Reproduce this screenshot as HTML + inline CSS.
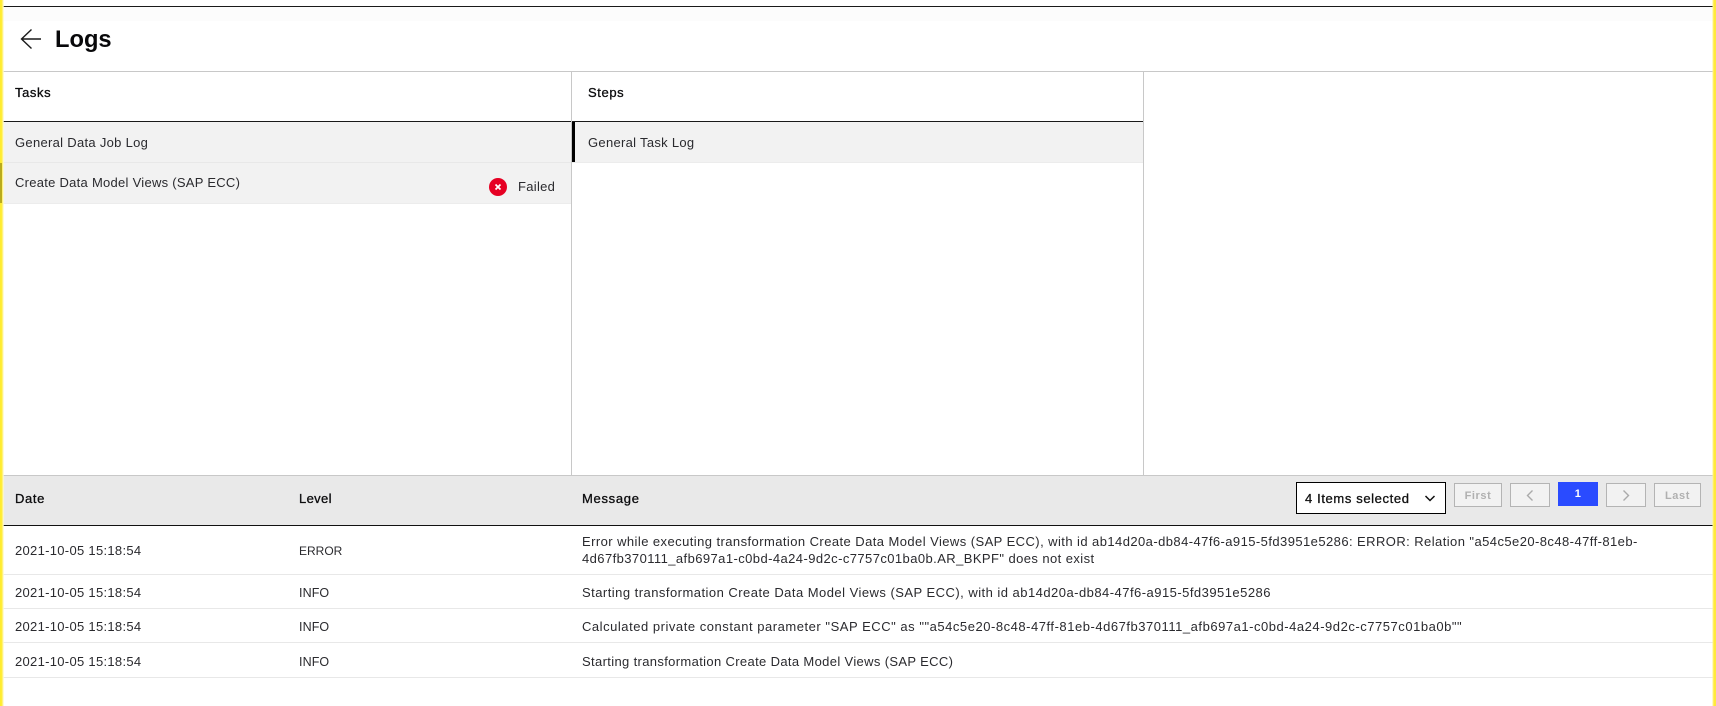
<!DOCTYPE html>
<html lang="en"><head><meta charset="utf-8"><title>Logs</title>
<style>
html,body{margin:0;padding:0;background:#fff}
body{position:relative;width:1716px;height:706px;overflow:hidden;font-family:"Liberation Sans",sans-serif;font-size:13px;color:#2a2a2e;letter-spacing:.3px}
.a{position:absolute}
.t{position:absolute;line-height:18px;height:18px;white-space:nowrap}
.h{color:#0c0c0e;-webkit-text-stroke:.3px #0c0c0e}
.btn{position:absolute;box-sizing:border-box;top:483px;height:24px;border:1px solid #b4b4b4;background:#f2f2f2;color:#b0b0b0;font-size:11px;font-weight:bold;text-align:center;line-height:24px;letter-spacing:.6px}
</style></head>
<body>
<div class="a" style="left:0;top:6px;width:1716px;height:1px;background:#1a1a1a"></div>
<div class="a" style="left:0;top:7px;width:1716px;height:14px;background:#fcfcfc"></div>

<svg class="a" style="left:20px;top:28px" width="24" height="24" viewBox="0 0 24 24" fill="none" stroke="#1a1a1a" stroke-width="1.4"><path d="M21 11H1.500M11.500 1.500L1.500 11L11.500 20.500"/></svg>
<div class="a" style="left:55px;top:24px;line-height:32px;font-size:23.7px;font-weight:bold;color:#08080a;letter-spacing:0">Logs</div>

<div class="a" style="left:0;top:71px;width:1716px;height:1px;background:#c8c8c8"></div>
<div class="a" style="left:571px;top:72px;width:1px;height:403px;background:#c8c8c8"></div>
<div class="a" style="left:1143px;top:72px;width:1px;height:403px;background:#c8c8c8"></div>

<div class="t h" style="left:15px;top:84px;letter-spacing:.6px">Tasks</div>
<div class="t h" style="left:588px;top:84px;letter-spacing:.6px">Steps</div>
<div class="a" style="left:0;top:121px;width:571px;height:1px;background:#1a1a1a"></div>
<div class="a" style="left:572px;top:121px;width:571px;height:1px;background:#1a1a1a"></div>

<div class="a" style="left:0;top:122px;width:571px;height:40px;background:#f2f2f2;border-bottom:1px solid #e8e8e8"></div>
<div class="a" style="left:0;top:163px;width:571px;height:40px;background:#f2f2f2;border-bottom:1px solid #ececec"></div>
<div class="a" style="left:572px;top:122px;width:571px;height:40px;background:#f2f2f2;border-bottom:1px solid #ececec"></div>
<div class="a" style="left:572px;top:122px;width:3px;height:40px;background:#000"></div>

<div class="t" style="left:15px;top:134px">General Data Job Log</div>
<div class="t" style="left:15px;top:174px;letter-spacing:.27px">Create Data Model Views (SAP ECC)</div>
<div class="t" style="left:588px;top:134px">General Task Log</div>

<svg class="a" style="left:489px;top:178px" width="18" height="18" viewBox="0 0 18 18"><circle cx="9" cy="9" r="9" fill="#e60023"/><path d="M6.500 6.500L11.500 11.500M11.500 6.500L6.500 11.500" stroke="#fff" stroke-width="1.700"/></svg>
<div class="t" style="left:518px;top:178px">Failed</div>

<div class="a" style="left:0;top:475px;width:1716px;height:50px;background:#e9e9e9;border-top:1px solid #c8c8c8;box-sizing:border-box"></div>
<div class="a" style="left:0;top:525px;width:1716px;height:1px;background:#111"></div>
<div class="t h" style="left:15px;top:490px;letter-spacing:.65px">Date</div>
<div class="t h" style="left:299px;top:490px;letter-spacing:.35px">Level</div>
<div class="t h" style="left:582px;top:490px;letter-spacing:.7px">Message</div>

<div class="a" style="left:1296px;top:482px;width:150px;height:32px;box-sizing:border-box;border:1px solid #000;background:#fff"></div>
<div class="t" style="left:1305px;top:490px;color:#111;-webkit-text-stroke:.3px #111;letter-spacing:.62px">4 Items selected</div>
<svg class="a" style="left:1423px;top:494px" width="14" height="10" viewBox="0 0 14 10" fill="none" stroke="#111" stroke-width="1.500"><path d="M2.500 2L7 6.500L11.500 2"/></svg>

<div class="btn" style="left:1454px;width:48px">First</div>
<div class="btn" style="left:1510px;width:40px"></div>
<svg class="a" style="left:1524px;top:489px" width="12" height="13" viewBox="0 0 12 13" fill="none" stroke="#aaa" stroke-width="1.400"><path d="M8.500 1.500L3.500 6.500L8.500 11.500"/></svg>
<div class="a" style="left:1558px;top:482px;width:40px;height:24px;background:#2a4bff;color:#fff;font-size:11px;font-weight:bold;text-align:center;line-height:25px">1</div>
<div class="btn" style="left:1606px;width:40px"></div>
<svg class="a" style="left:1620px;top:489px" width="12" height="13" viewBox="0 0 12 13" fill="none" stroke="#aaa" stroke-width="1.400"><path d="M3.500 1.500L8.500 6.500L3.500 11.500"/></svg>
<div class="btn" style="left:1654px;width:47px">Last</div>

<div class="a" style="left:0;top:574px;width:1716px;height:1px;background:#e8e8e8"></div>
<div class="a" style="left:0;top:608px;width:1716px;height:1px;background:#e8e8e8"></div>
<div class="a" style="left:0;top:642px;width:1716px;height:1px;background:#e8e8e8"></div>
<div class="a" style="left:0;top:677px;width:1716px;height:1px;background:#e8e8e8"></div>

<div class="t" style="left:15px;top:542px">2021-10-05 15:18:54</div>
<div class="t" style="left:299px;top:542px;font-size:12px;letter-spacing:0">ERROR</div>
<div class="t" style="left:582px;top:533px;letter-spacing:.43px">Error while executing transformation Create Data Model Views (SAP ECC), with id ab14d20a-db84-47f6-a915-5fd3951e5286: ERROR: Relation "a54c5e20-8c48-47ff-81eb-</div>
<div class="t" style="left:582px;top:550px;letter-spacing:.42px">4d67fb370111_afb697a1-c0bd-4a24-9d2c-c7757c01ba0b.AR_BKPF" does not exist</div>

<div class="t" style="left:15px;top:584px">2021-10-05 15:18:54</div>
<div class="t" style="left:299px;top:584px;font-size:12.5px;letter-spacing:.1px">INFO</div>
<div class="t" style="left:582px;top:584px;letter-spacing:.47px">Starting transformation Create Data Model Views (SAP ECC), with id ab14d20a-db84-47f6-a915-5fd3951e5286</div>

<div class="t" style="left:15px;top:618px">2021-10-05 15:18:54</div>
<div class="t" style="left:299px;top:618px;font-size:12.5px;letter-spacing:.1px">INFO</div>
<div class="t" style="left:582px;top:618px;letter-spacing:.53px">Calculated private constant parameter "SAP ECC" as ""a54c5e20-8c48-47ff-81eb-4d67fb370111_afb697a1-c0bd-4a24-9d2c-c7757c01ba0b""</div>

<div class="t" style="left:15px;top:653px">2021-10-05 15:18:54</div>
<div class="t" style="left:299px;top:653px;font-size:12.5px;letter-spacing:.1px">INFO</div>
<div class="t" style="left:582px;top:653px;letter-spacing:.35px">Starting transformation Create Data Model Views (SAP ECC)</div>

<div class="a" style="left:0;top:0;width:4px;height:706px;background:linear-gradient(90deg,#ffec2e 0,#ffec2e 1.500px,#fff27a 2.500px,#fffbd0 3.500px,rgba(255,255,255,0) 4px)"></div>
<div class="a" style="left:0;top:163px;width:2px;height:40px;background:#b9ab1c"></div>
<div class="a" style="left:1712px;top:0;width:4px;height:706px;background:linear-gradient(90deg,rgba(255,255,255,0) 0,#fff58a 1px,#ffe93a 2px,#ffe93a 4px)"></div>
</body></html>
